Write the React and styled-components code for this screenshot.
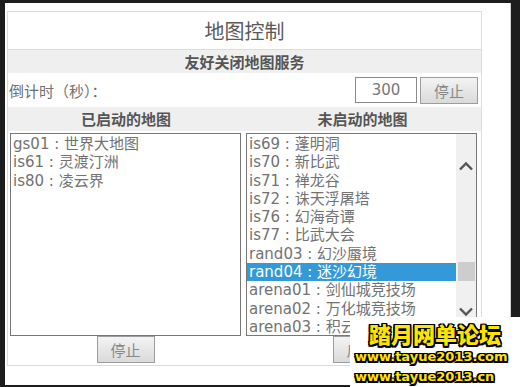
import React from "react";
import styled, { createGlobalStyle } from "styled-components";

const activeMaps = [
  { id: "gs01", name: "世界大地图" },
  { id: "is61", name: "灵渡汀洲" },
  { id: "is80", name: "凌云界" },
];

const idleMaps = [
  { id: "is69", name: "蓬明洞" },
  { id: "is70", name: "新比武" },
  { id: "is71", name: "禅龙谷" },
  { id: "is72", name: "诛天浮屠塔" },
  { id: "is76", name: "幻海奇谭" },
  { id: "is77", name: "比武大会" },
  { id: "rand03", name: "幻沙蜃境" },
  { id: "rand04", name: "迷沙幻境", selected: true },
  { id: "arena01", name: "剑仙城竞技场" },
  { id: "arena02", name: "万化城竞技场" },
  { id: "arena03", name: "积云城竞技场" },
];

const Chevron = ({ up }) => (
  <svg width="16" height="10" viewBox="0 0 16 10">
    <polyline
      points={up ? "2,8.5 8,2.5 14,8.5" : "2,1.5 8,7.5 14,1.5"}
      fill="none"
      stroke="#555"
      strokeWidth="2.4"
    />
  </svg>
);

const App = () => {
  return (
    <>
      <GlobalStyle />
      <Page>
        <Board>
          <TitleRow>地图控制</TitleRow>
          <BandRow>友好关闭地图服务</BandRow>
          <CountRow>
            <CountLabel>倒计时（秒）：</CountLabel>
            <CountInput defaultValue="300" />
            <GrayButton>停止</GrayButton>
          </CountRow>
          <ColumnHeads>
            <div>已启动的地图</div>
            <div>未启动的地图</div>
          </ColumnHeads>
          <Columns>
            <Column>
              <ListBox>
                <Options>
                  {activeMaps.map((m) => (
                    <Option key={m.id}>
                      {m.id} : {m.name}
                    </Option>
                  ))}
                </Options>
              </ListBox>
              <GrayButton>停止</GrayButton>
            </Column>
            <Column>
              <ListBox>
                <Options>
                  {idleMaps.map((m) => (
                    <Option key={m.id} $selected={m.selected}>
                      {m.id} : {m.name}
                    </Option>
                  ))}
                </Options>
                <ScrollBar>
                  <ArrowUp>
                    <Chevron up />
                  </ArrowUp>
                  <Thumb />
                  <ArrowDown>
                    <Chevron />
                  </ArrowDown>
                </ScrollBar>
              </ListBox>
              <GrayButton>启动</GrayButton>
            </Column>
          </Columns>
        </Board>
      </Page>
      <Watermark>
        <MarkTitle>踏月网单论坛</MarkTitle>
        <MarkUrl>www.tayue2013.com</MarkUrl>
        <MarkUrl>www.tayue2013.cn</MarkUrl>
      </Watermark>
    </>
  );
};

const GlobalStyle = createGlobalStyle`
  body {
    margin: 0;
    background: #1d1d1d;
    font-family: "DejaVu Sans", "Noto Sans CJK SC", sans-serif;
  }
`;

const Page = styled.div`
  margin: 3px 0 0 5px;
  width: 506px;
  height: 382px;
  box-sizing: border-box;
  padding: 8px 0 0 2px;
  background: #fff;
  border-right: 1px solid #cfcfcf;
`;

const Board = styled.div`
  width: 475px;
  border: 1px solid #dcdcdc;
  box-sizing: border-box;
  color: #555;
`;

const TitleRow = styled.div`
  height: 37px;
  line-height: 37px;
  border-bottom: 1px solid #dcdcdc;
  text-align: center;
  font-size: 20px;
  font-family: "Noto Sans CJK SC", sans-serif;
  color: #5a5a5a;
`;

const BandRow = styled.div`
  height: 23px;
  line-height: 23px;
  background: #efefef;
  text-align: center;
  font-size: 15px;
  font-weight: bold;
  font-family: "Noto Sans CJK SC", sans-serif;
  color: #555;
`;

const CountRow = styled.div`
  height: 34px;
  display: flex;
  align-items: center;
  gap: 3px;
  padding: 0 3px 0 1px;
`;

const CountLabel = styled.span`
  font-size: 15px;
  color: #707070;
  font-family: "Noto Sans CJK SC", sans-serif;
  margin-right: auto;
`;

const CountInput = styled.input`
  width: 62px;
  height: 26px;
  box-sizing: border-box;
  border: 1px solid #8a8a8a;
  text-align: center;
  font-size: 15px;
  font-family: "DejaVu Sans", sans-serif;
  color: #777;
  padding: 0;
  outline: none;
`;

const GrayButton = styled.button`
  width: 58px;
  height: 27px;
  box-sizing: border-box;
  border: 1px solid #9d9d9d;
  background: linear-gradient(#f3f3f3, #dadada);
  color: #888;
  font-size: 15px;
  font-family: "Noto Sans CJK SC", sans-serif;
  padding: 0;
  cursor: pointer;
`;

const ColumnHeads = styled.div`
  display: grid;
  grid-template-columns: 236px 1fr;
  height: 24px;
  line-height: 24px;
  background: #efefef;
  text-align: center;
  font-size: 15px;
  font-weight: bold;
  font-family: "Noto Sans CJK SC", sans-serif;
  color: #555;
`;

const Columns = styled.div`
  display: grid;
  grid-template-columns: 236px 1fr;
`;

const Column = styled.div`
  width: 231px;
  margin-left: 2px;
  padding: 2px 0 2px;
  display: flex;
  flex-direction: column;
  align-items: center;
`;

const ListBox = styled.div`
  width: 231px;
  height: 203px;
  box-sizing: border-box;
  border: 1px solid #777;
  background: #fff;
  display: flex;
  overflow: hidden;
`;

const Options = styled.div`
  flex: 1;
  min-width: 0;
  padding-top: 1px;
`;

const Option = styled.div`
  height: 18.3px;
  line-height: 18.3px;
  padding-left: 2px;
  font-size: 15px;
  white-space: nowrap;
  overflow: hidden;
  color: ${(p) => (p.$selected ? "#fff" : "#727272")};
  background: ${(p) => (p.$selected ? "#3399d9" : "transparent")};
`;

const ScrollBar = styled.div`
  width: 20px;
  background: #f0f0f0;
  display: flex;
  flex-direction: column;
  align-items: center;
`;

const ArrowUp = styled.div`
  margin-top: 22px;
  height: 10px;
`;

const Thumb = styled.div`
  margin-top: 96px;
  width: 17px;
  height: 19px;
  background: #cdcdcd;
`;

const ArrowDown = styled.div`
  margin-top: 21px;
  height: 10px;
`;

const Watermark = styled.div`
  position: fixed;
  right: 0;
  bottom: 0;
  width: 170px;
  height: 70px;
  background: #fff;
  padding-top: 3px;
  box-sizing: border-box;
`;

const outline =
  "-1.5px -1.5px 0 #000, 1.5px -1.5px 0 #000, -1.5px 1.5px 0 #000, 1.5px 1.5px 0 #000, 0 1.5px 0 #000, 0 -1.5px 0 #000, 1.5px 0 0 #000, -1.5px 0 0 #000";

const MarkTitle = styled.div`
  text-align: center;
  font-family: "Noto Sans CJK SC", sans-serif;
  font-weight: 900;
  font-size: 22px;
  line-height: 27px;
  color: #ffe400;
  text-shadow: ${outline};
`;

const MarkUrl = styled.div`
  padding-left: 5px;
  font-family: "DejaVu Sans", sans-serif;
  font-weight: bold;
  font-size: 13px;
  line-height: 20px;
  color: #ffe400;
  text-shadow: ${outline};
`;

export default App;
